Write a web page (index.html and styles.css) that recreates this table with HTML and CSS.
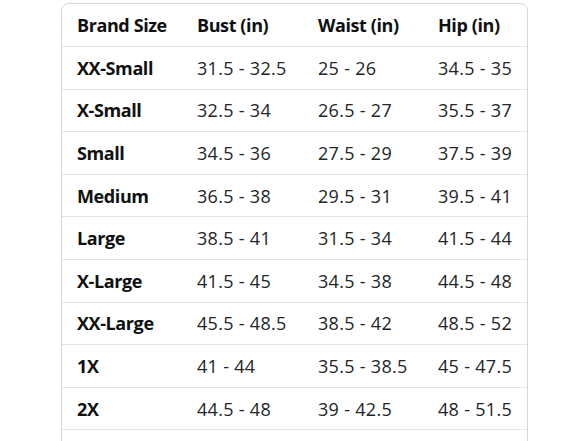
FILE: index.html
```html
<!DOCTYPE html>
<html lang="en">
<head>
<meta charset="utf-8">
<title>Size chart</title>
<link rel="stylesheet" href="styles.css">
</head>
<body>
<div class="chart">
  <table class="size-table">
    <thead>
      <tr><th>Brand Size</th><th>Bust (in)</th><th>Waist (in)</th><th>Hip (in)</th></tr>
    </thead>
    <tbody>
      <tr><th>XX-Small</th><td>31.5 - 32.5</td><td>25 - 26</td><td>34.5 - 35</td></tr>
      <tr><th>X-Small</th><td>32.5 - 34</td><td>26.5 - 27</td><td>35.5 - 37</td></tr>
      <tr><th>Small</th><td>34.5 - 36</td><td>27.5 - 29</td><td>37.5 - 39</td></tr>
      <tr><th>Medium</th><td>36.5 - 38</td><td>29.5 - 31</td><td>39.5 - 41</td></tr>
      <tr><th>Large</th><td>38.5 - 41</td><td>31.5 - 34</td><td>41.5 - 44</td></tr>
      <tr><th>X-Large</th><td>41.5 - 45</td><td>34.5 - 38</td><td>44.5 - 48</td></tr>
      <tr><th>XX-Large</th><td>45.5 - 48.5</td><td>38.5 - 42</td><td>48.5 - 52</td></tr>
      <tr><th>1X</th><td>41 - 44</td><td>35.5 - 38.5</td><td>45 - 47.5</td></tr>
      <tr><th>2X</th><td>44.5 - 48</td><td>39 - 42.5</td><td>48 - 51.5</td></tr>
      <tr class="blank"><th></th><td></td><td></td><td></td></tr>
    </tbody>
  </table>
</div>
</body>
</html>
```
FILE: styles.css
```css
html, body {
  margin: 0;
  padding: 0;
  background: #ffffff;
}
body {
  font-family: "Open Sans", "Liberation Sans", sans-serif;
  color: #0f1111;
  overflow: hidden;
  height: 441px;
}
.chart {
  padding: 3px 0 0 61px;
}
.size-table {
  width: 467px;
  border-collapse: separate;
  border-spacing: 0;
  border: 1px solid #d5d9d9;
  border-radius: 8px;
  table-layout: fixed;
}
.size-table th,
.size-table td {
  height: 42.6px;
  padding: 0 0 0 15px;
  text-align: left;
  font-size: 18px;
  white-space: nowrap;
  border-bottom: 1px solid #e3e6e6;
  box-sizing: border-box;
}
.size-table th {
  font-weight: 700;
  letter-spacing: -0.4px;
}
.size-table td {
  font-weight: 400;
  letter-spacing: 0.3px;
  color: #222626;
}
.size-table th:nth-child(1) { width: 120px; }
.size-table th:nth-child(2),
.size-table td:nth-child(2) { width: 121px; }
.size-table th:nth-child(3),
.size-table td:nth-child(3) { width: 120px; }
.size-table thead th { height: 43px; }
.blank th, .blank td { height: 42px; }
```
